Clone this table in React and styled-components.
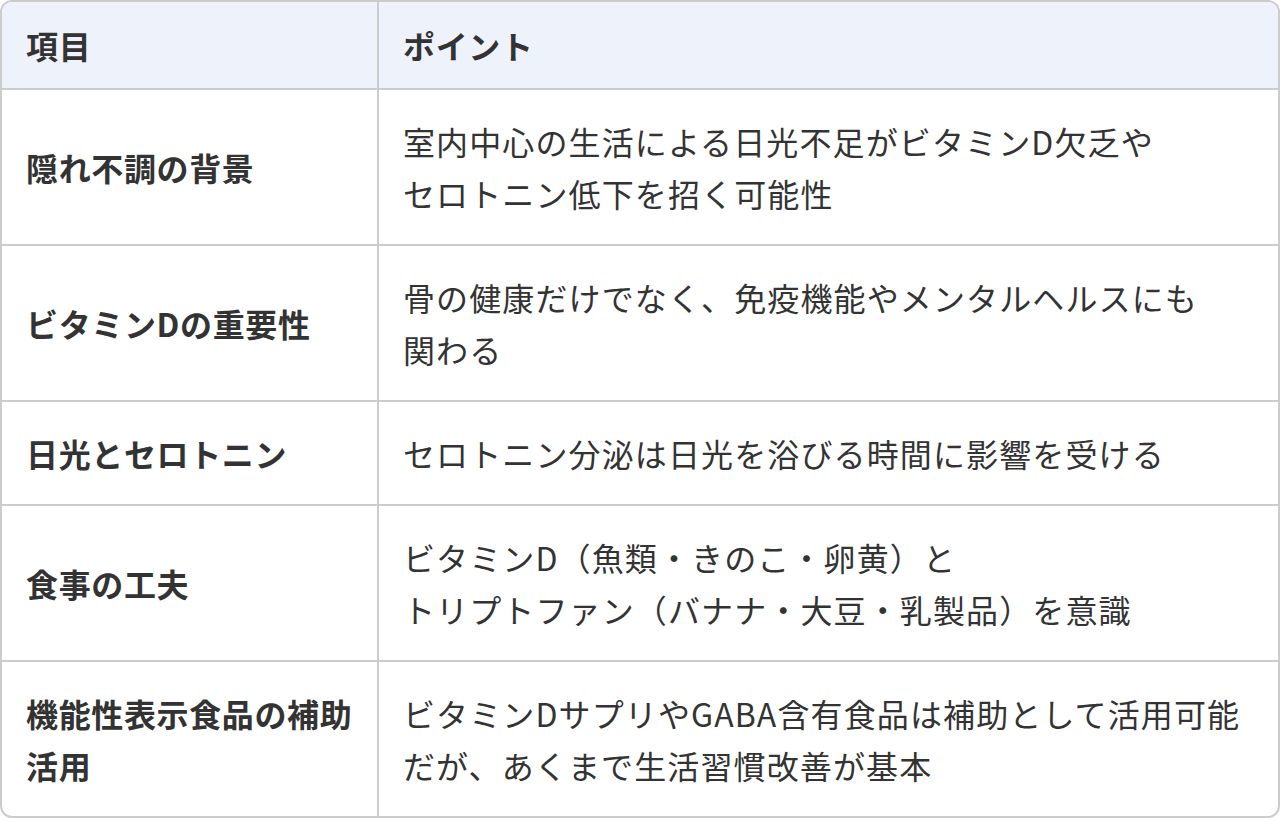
import React from 'react';
import styled, { createGlobalStyle } from 'styled-components';

const GlobalStyle = createGlobalStyle`
  html, body {
    margin: 0;
    padding: 0;
    background: #ffffff;
  }
  body {
    font-family: "Noto Sans CJK JP", "Noto Sans", sans-serif;
    color: #333333;
  }
`;

const StyledWrapper = styled.div`
  width: 1280px;
  height: 818px;
  box-sizing: border-box;
`;

const StyledTable = styled.table`
  width: 100%;
  height: 100%;
  table-layout: fixed;
  border-collapse: separate;
  border-spacing: 0;
  border: 2px solid #cccccc;
  border-radius: 12px;
  overflow: hidden;
  box-sizing: border-box;
`;

const StyledHeadCell = styled.th`
  background: #eef2fb;
  text-align: left;
  font-weight: 700;
  font-size: 32px;
  line-height: 52px;
  letter-spacing: 0.02em;
  padding: 17px 20px 17px 24px;
  border-bottom: 2px solid #cccccc;
  border-right: ${({ last }) => (last ? 'none' : '2px solid #cccccc')};
`;

const StyledCell = styled.td`
  font-size: 32px;
  line-height: 52px;
  letter-spacing: ${({ bold }) => (bold ? '0.02em' : '0.035em')};
  font-weight: ${({ bold }) => (bold ? 700 : 400)};
  padding: 24px 18px 24px 24px;
  vertical-align: middle;
  border-bottom: ${({ lastRow }) => (lastRow ? 'none' : '2px solid #cccccc')};
  border-right: ${({ last }) => (last ? 'none' : '2px solid #cccccc')};
`;

const rows = [
  {
    item: '隠れ不調の背景',
    point: ['室内中心の生活による日光不足がビタミンD欠乏や', 'セロトニン低下を招く可能性'],
  },
  {
    item: 'ビタミンDの重要性',
    point: ['骨の健康だけでなく、免疫機能やメンタルヘルスにも', '関わる'],
  },
  {
    item: '日光とセロトニン',
    point: ['セロトニン分泌は日光を浴びる時間に影響を受ける'],
  },
  {
    item: '食事の工夫',
    point: ['ビタミンD（魚類・きのこ・卵黄）と', 'トリプトファン（バナナ・大豆・乳製品）を意識'],
  },
  {
    item: '機能性表示食品の補助活用',
    point: ['ビタミンDサプリやGABA含有食品は補助として活用可能', 'だが、あくまで生活習慣改善が基本'],
  },
];

const App = () => (
  <StyledWrapper>
    <GlobalStyle />
    <StyledTable>
      <colgroup>
        <col style={{ width: '377px' }} />
        <col />
      </colgroup>
      <thead>
        <tr>
          <StyledHeadCell>項目</StyledHeadCell>
          <StyledHeadCell last>ポイント</StyledHeadCell>
        </tr>
      </thead>
      <tbody>
        {rows.map((row, i) => (
          <tr key={row.item}>
            <StyledCell bold lastRow={i === rows.length - 1}>
              {row.item}
            </StyledCell>
            <StyledCell last lastRow={i === rows.length - 1}>
              {row.point.map((line, j) => (
                <React.Fragment key={line}>
                  {j > 0 && <br />}
                  {line}
                </React.Fragment>
              ))}
            </StyledCell>
          </tr>
        ))}
      </tbody>
    </StyledTable>
  </StyledWrapper>
);

export default App;
